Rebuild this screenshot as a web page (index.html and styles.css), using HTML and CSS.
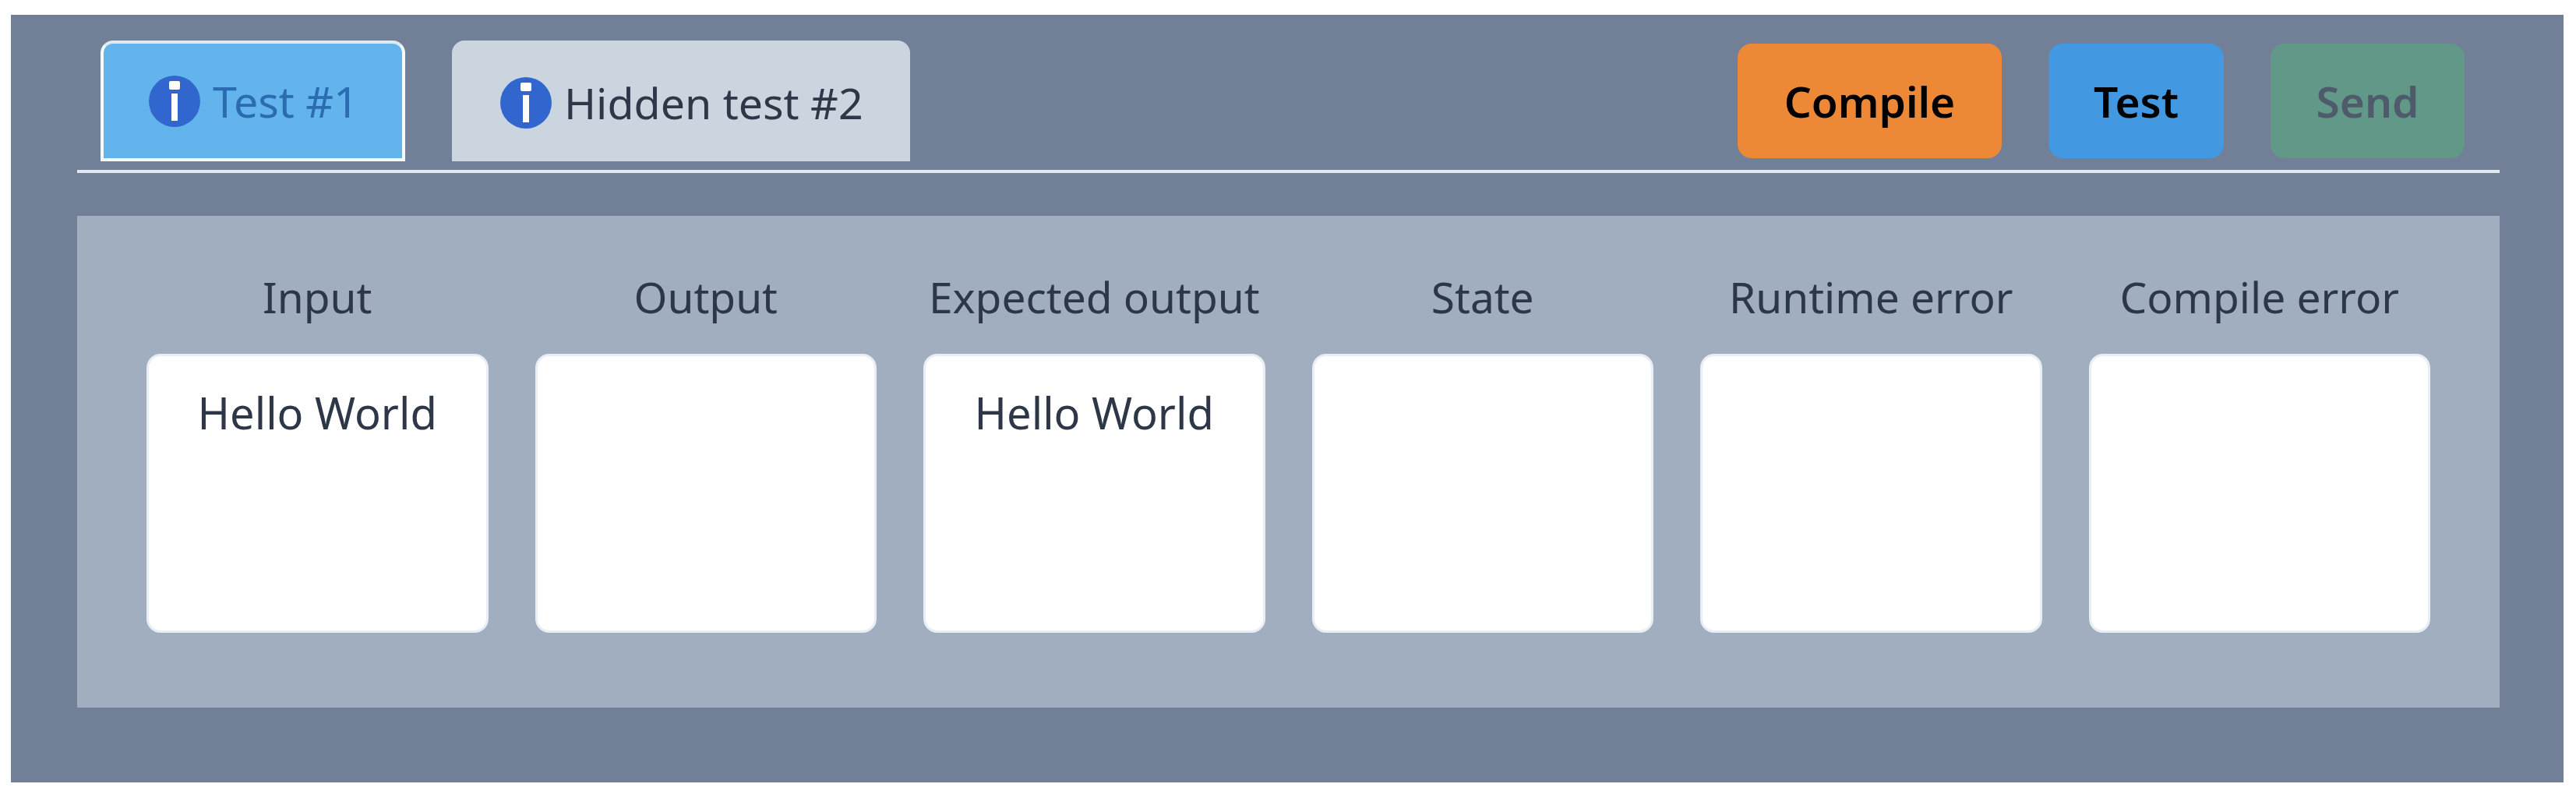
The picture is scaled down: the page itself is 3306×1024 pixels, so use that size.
FILE: index.html
```html
<!doctype html>
<html lang="en">
<head>
	<meta charset="UTF-8">
	<title>Tests</title>
	<link rel="stylesheet" href="styles.css">
</head>
<body>
	<div class="wrap">
		<div class="top">
			<div class="tabs">
				<a class="tab active">
					<svg class="info" viewBox="0 0 66 66"><circle cx="33" cy="33" r="33"/><rect class="dot" x="26" y="7" width="14" height="11" rx="2"/><rect class="dot" x="29" y="23" width="8" height="35"/></svg>
					<span>Test #1</span>
				</a>
				<a class="tab">
					<svg class="info" viewBox="0 0 66 66"><circle cx="33" cy="33" r="33"/><rect class="dot" x="26" y="7" width="14" height="11" rx="2"/><rect class="dot" x="29" y="23" width="8" height="35"/></svg>
					<span>Hidden test #2</span>
				</a>
			</div>
			<div class="actions">
				<a class="btn compile">Compile</a>
				<a class="btn test">Test</a>
				<a class="btn send">Send</a>
			</div>
		</div>
		<div class="results">
			<div class="col">
				<div class="label">Input</div>
				<div class="box">Hello World</div>
			</div>
			<div class="col">
				<div class="label">Output</div>
				<div class="box"></div>
			</div>
			<div class="col">
				<div class="label">Expected output</div>
				<div class="box">Hello World</div>
			</div>
			<div class="col">
				<div class="label">State</div>
				<div class="box"></div>
			</div>
			<div class="col">
				<div class="label">Runtime error</div>
				<div class="box"></div>
			</div>
			<div class="col">
				<div class="label">Compile error</div>
				<div class="box"></div>
			</div>
		</div>
	</div>
</body>
</html>
```

FILE: styles.css
```css
body{
	margin: 0;
	padding: 19px 16px 20px 14px;
	background: #fff;
	font-family: "Noto Sans", "Open Sans", sans-serif;
	font-size: 56px;
	line-height: 84px;
	color: #2d3748;
}
.wrap{
	height: 985px;
	box-sizing: border-box;
	padding: 33px 82px 0 85px;
	background: #718096;
}
.top{
	display: flex;
	justify-content: space-between;
	padding: 0 45px 11px 30px;
	border-bottom: 4px solid #e2e8f0;
}
.tabs{
	display: flex;
	gap: 60px;
}
.tab{
	display: flex;
	align-items: center;
	gap: 16px;
	height: 155px;
	box-sizing: border-box;
	padding: 0 56px 0 58px;
	border: 4px solid #cbd5e0;
	border-bottom: 0;
	border-radius: 16px 16px 0 0;
	background: #cbd5e0;
	font-size: 55.5px;
}
.tab.active{
	border: 4px solid #f7fafc;
	border-top-color: #e2e8f0;
	background: #63b3ed;
	color: #2b6cb0;
}
.info{
	width: 66px;
	height: 66px;
	fill: #3066ce;
}
.info .dot{
	fill: #fff;
}
.actions{
	display: flex;
	gap: 60px;
	padding-top: 4px;
}
.btn{
	display: flex;
	align-items: center;
	justify-content: center;
	height: 147px;
	border-radius: 18px;
	font-size: 55px;
	font-weight: 600;
	color: #000;
}
.compile{
	width: 339px;
	background: #ed8936;
}
.test{
	width: 225px;
	background: #4299e1;
}
.send{
	width: 249px;
	background: #619887;
	color: #4f5b6b;
}
.results{
	display: grid;
	grid-template-columns: repeat(6, 1fr);
	gap: 60px;
	height: 631px;
	box-sizing: border-box;
	margin-top: 55px;
	padding: 62px 89px 0 89px;
	background: #a0aec0;
}
.label{
	margin-bottom: 31px;
	font-size: 55px;
	text-align: center;
	white-space: nowrap;
}
.box{
	height: 358px;
	box-sizing: border-box;
	padding-top: 30px;
	border: 3px solid #e8eef4;
	border-radius: 18px;
	background: #fff;
	text-align: center;
}
```
